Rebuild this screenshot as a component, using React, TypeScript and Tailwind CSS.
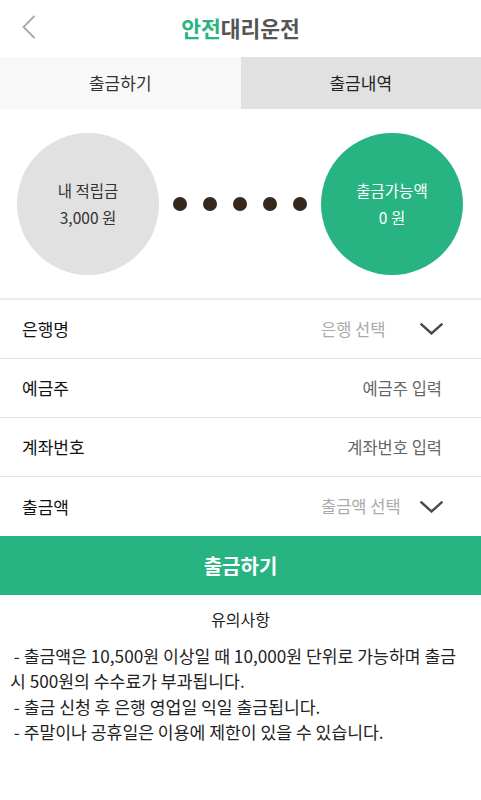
import React from "react";

const Chevron = () => (
  <svg width="23" height="12" viewBox="0 0 23 12" fill="none">
    <path d="M1.5 1.5 L11.5 10.5 L21.5 1.5" stroke="#4a4a4a" strokeWidth="2.4" strokeLinecap="square" />
  </svg>
);

function Row({ label, value, select, last }: { label: string; value: string; select?: boolean; last?: boolean }) {
  return (
    <div
      className={`flex h-[59px] items-center justify-between pl-[22px] ${select ? "pr-[38px]" : "pr-[39px]"} ${
        last ? "" : "border-b border-[#e6e6e6]"
      }`}
    >
      <span className="text-[17px] text-[#111]">{label}</span>
      {select ? (
        <div className="flex w-[122px] items-center justify-between">
          <span className="text-[16.5px] text-[#aaa]">{value}</span>
          <Chevron />
        </div>
      ) : (
        <span className="text-[16.5px] text-[#666]">{value}</span>
      )}
    </div>
  );
}

export default function App() {
  return (
    <div
      className="w-[481px] h-[800px] bg-white overflow-hidden"
      style={{ fontFamily: '"Noto Sans CJK KR", "Noto Sans", sans-serif' }}
    >
      {/* header */}
      <div className="relative flex h-[57px] items-center justify-center">
        <svg width="14" height="24" viewBox="0 0 14 24" fill="none" className="absolute left-[22px] top-[15px]">
          <path d="M12.5 1 L1.5 12 L12.5 23" stroke="#a8a8a8" strokeWidth="1.8" />
        </svg>
        <h1 className="text-[21.5px] font-bold">
          <span className="text-[#27b382]">안전</span>
          <span className="text-[#555]">대리운전</span>
        </h1>
      </div>

      {/* tabs */}
      <div className="flex h-[52px]">
        <div className="flex flex-1 items-center justify-center bg-[#f8f8f8] text-[17px] text-[#333]">출금하기</div>
        <div className="flex flex-1 items-center justify-center bg-[#e1e1e1] text-[17px] text-[#222]">출금내역</div>
      </div>

      {/* circles */}
      <div className="flex items-center justify-between pl-[17px] pr-[18px] pt-[24px] pb-[23px]">
        <div className="flex h-[142px] w-[142px] flex-col items-center justify-center rounded-full bg-[#e1e1e1] text-[15.5px] leading-[27px] text-[#333]">
          <span>내 적립금</span>
          <span>3,000 원</span>
        </div>
        <div className="flex gap-[16px]">
          <span className="h-[14px] w-[14px] rounded-full bg-[#35281c]" />
          <span className="h-[14px] w-[14px] rounded-full bg-[#35281c]" />
          <span className="h-[14px] w-[14px] rounded-full bg-[#35281c]" />
          <span className="h-[14px] w-[14px] rounded-full bg-[#35281c]" />
          <span className="h-[14px] w-[14px] rounded-full bg-[#35281c]" />
        </div>
        <div className="flex h-[142px] w-[142px] flex-col items-center justify-center rounded-full bg-[#28b382] text-[15.5px] leading-[27px] text-white">
          <span>출금가능액</span>
          <span>0 원</span>
        </div>
      </div>

      {/* form */}
      <div className="border-t-2 border-[#ececec]">
        <Row label="은행명" value="은행 선택" select />
        <Row label="예금주" value="예금주 입력" />
        <Row label="계좌번호" value="계좌번호 입력" />
        <Row label="출금액" value="출금액 선택" select last />
      </div>

      <button className="flex h-[59px] w-full items-center justify-center bg-[#28b382] text-[20px] font-bold text-white">
        출금하기
      </button>

      {/* notes */}
      <div className="px-[10px] pt-[12px] text-[#222]">
        <p className="text-center text-[16px] leading-[24px]">유의사항</p>
        <div className="mt-[12px] text-[17.2px] leading-[25.3px]">
          <p>&nbsp;- 출금액은 10,500원 이상일 때 10,000원 단위로 가능하며 출금 시 500원의 수수료가 부과됩니다.</p>
          <p>&nbsp;- 출금 신청 후 은행 영업일 익일 출금됩니다.</p>
          <p>&nbsp;- 주말이나 공휴일은 이용에 제한이 있을 수 있습니다.</p>
        </div>
      </div>
    </div>
  );
}
